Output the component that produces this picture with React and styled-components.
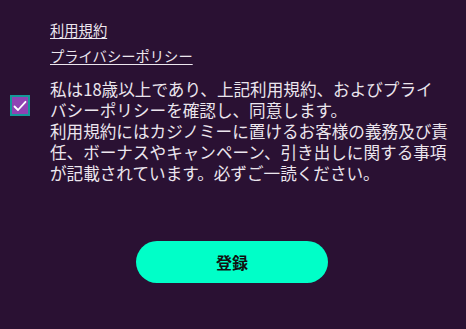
import React, { useState } from "react"
import styled, { createGlobalStyle } from "styled-components"

const GlobalStyle = createGlobalStyle`
  html, body {
    margin: 0;
    padding: 0;
    background: #2a1133;
  }
  body {
    font-family: "Noto Sans CJK JP", "Noto Sans", sans-serif;
    color: #ece6ee;
  }
`

const Page = styled.div`
  width: 466px;
  height: 329px;
  box-sizing: border-box;
  padding: 20px 10px 0;
  background: #2a1133;
`

const Links = styled.div`
  display: flex;
  flex-direction: column;
  align-items: flex-start;
  gap: 6px;
  margin-left: 40px;
`

const TermsLink = styled.a`
  font-size: 14.3px;
  line-height: 20px;
  color: #ece6ee;
  text-decoration: underline;
  text-underline-offset: 2px;
  cursor: pointer;
`

const AgreeRow = styled.label`
  display: flex;
  align-items: flex-start;
  gap: 20px;
  margin-top: 13px;
  cursor: pointer;
`

const Box = styled.span`
  flex: 0 0 auto;
  width: 16px;
  height: 17px;
  margin-top: 16px;
  border: 2px solid #149a9a;
  background: ${props => (props.checked ? "#8e44b4" : "transparent")};
  display: flex;
  align-items: center;
  justify-content: center;
`

/* 16.6px wraps the first line right after プライ, as in the design */
const AgreeText = styled.p`
  margin: 0;
  width: 398.4px;
  font-size: 16.6px;
  line-height: 21px;
  color: #ece6ee;
`

const Actions = styled.div`
  display: flex;
  justify-content: center;
  margin-top: 57px;
  padding-right: 2px;
`

const SubmitButton = styled.button`
  width: 192px;
  height: 42px;
  border: none;
  border-radius: 21px;
  background: #00ffc8;
  color: #111;
  font-family: "Noto Sans CJK JP", sans-serif;
  font-size: 16px;
  font-weight: 700;
  cursor: pointer;
`

export default function App() {
  const [checked, setChecked] = useState(true)

  return (
    <>
      <GlobalStyle />
      <Page>
        <Links>
          <TermsLink>利用規約</TermsLink>
          <TermsLink>プライバシーポリシー</TermsLink>
        </Links>
        <AgreeRow onClick={() => setChecked(!checked)}>
          <Box checked={checked}>
            {checked && (
              <svg width="14" height="12" viewBox="0 0 14 12">
                <path
                  d="M1.5 6.5 L5 10 L12.5 1.8"
                  fill="none"
                  stroke="#fff"
                  strokeWidth="1.8"
                  strokeLinecap="round"
                  strokeLinejoin="round"
                />
              </svg>
            )}
          </Box>
          <AgreeText>
            私は18歳以上であり、上記利用規約、およびプライバシーポリシーを確認し、同意します。
            <br />
            利用規約にはカジノミーに置けるお客様の義務及び責任、ボーナスやキャンペーン、引き出しに関する事項が記載されています。必ずご一読ください。
          </AgreeText>
        </AgreeRow>
        <Actions>
          <SubmitButton>登録</SubmitButton>
        </Actions>
      </Page>
    </>
  )
}
